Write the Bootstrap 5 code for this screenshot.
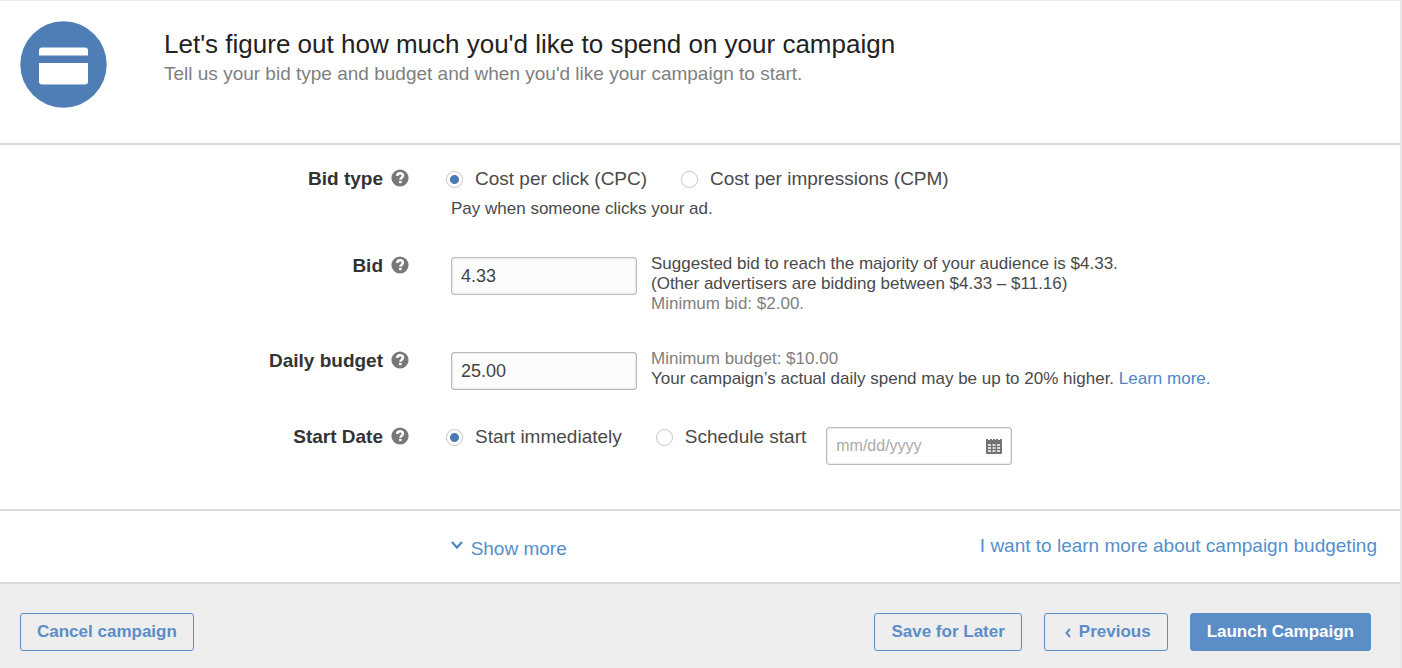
<!DOCTYPE html>
<html lang="en">
<head>
<meta charset="utf-8">
<meta name="viewport" content="width=device-width, initial-scale=1">
<title>Campaign budget</title>
<link rel="stylesheet" href="https://cdn.jsdelivr.net/npm/bootstrap@5.3.0/dist/css/bootstrap.min.css">
<style>
  body { font-family: "Liberation Sans", Arial, sans-serif; font-size: 19px; line-height: 24px; color: #4a4a4a; }
  a { color: #4b87c5; text-decoration: none; }
  .page-frame { border-top: 1px solid #eee; border-right: 2px solid #e8e8ec; }
  .section-line { border-bottom: 2px solid #d9d9d9; }
  .intro { padding: 20px; gap: 57px; min-height: 144px; }
  .intro-icon { width: 87px; height: 87px; }
  .intro-title { font-size: 26px; line-height: 32px; color: #222; margin: 7px 0 0; font-weight: 300; }
  .intro-text { line-height: 20px; }
  .fine { font-size: 17px; line-height: 20px; }
  .intro-text, .muted { color: #808080; }
  .form-area { padding: 22px 0 44px; gap: 35px; }
  .label-col { width: 32%; padding-right: 39px; color: #333; font-weight: 700; }
  .field-col { padding-left: 3px; }
  .help { border: 0; padding: 2px 0 0; background: none; line-height: 0; }
  .choices { gap: 34px; margin-left: -5px; }
  .choice { gap: 12px; }
  .form-check-input.dot { width: 17px; height: 17px; margin: 0; border: 1px solid #c4c4c4; }
  .form-check-input.dot:checked { background: radial-gradient(circle, #4a7ab5 0 4px, #fff 5px); border-color: #c4c4c4; }
  .money, .date-box { width: 186px; height: 38px; border: 1px solid #bbb; border-radius: 3px; background: #fcfcfc; box-shadow: inset 0 0 2px #bbb; color: #444; }
  .money { margin-top: 3px; padding: 0 9px; font-size: 18px; }
  .date-box { margin: 2px 0 0 20px; padding: 0 9px; background: #fff; }
  .date-box input { min-width: 0; outline: 0; font-size: 16px; }
  .date-box input::placeholder { color: #aaa; opacity: 1; }
  .hints { margin-left: 14px; }
  .more-area { min-height: 73px; padding: 0 23px 2px 0; }
  .more-area a { color: #548fcb; }
  .more-link { margin-left: calc(32% + 10px); padding-top: 6px; }
  .actions { background: #eee; padding: 29px 29px 18px 20px; gap: 22px; }
  .btn.action { --bs-btn-color: #5b8dc6; --bs-btn-border-color: #5b8dc6; --bs-btn-hover-bg: #5b8dc6; --bs-btn-hover-color: #fff;
    --bs-btn-border-width: 1px; --bs-btn-padding-x: 16px; --bs-btn-padding-y: 6px; --bs-btn-border-radius: 3px;
    --bs-btn-font-size: 17px; --bs-btn-line-height: 24px; --bs-btn-font-weight: 700; }
  .btn.action-main { --bs-btn-bg: #5b8dc6; --bs-btn-color: #fff; }
</style>
</head>
<body>
<svg class="d-none" aria-hidden="true">
  <symbol id="question" viewBox="0 0 18 18">
    <circle cx="9" cy="9" r="8.6" fill="#77787b"/>
    <path d="M6.2 7.1C6.2 5.2 7.4 4.3 9.1 4.3s2.8 1 2.8 2.4c0 2-2.5 2-2.5 4" fill="none" stroke="#fff" stroke-width="2.4"/>
    <rect x="8.1" y="11.9" width="2.5" height="2.3" fill="#fff"/>
  </symbol>
</svg>
<main class="page-frame min-vh-100 d-flex flex-column">
  <header class="intro section-line d-flex align-items-start">
    <svg class="intro-icon flex-shrink-0" viewBox="0 0 87 87" aria-hidden="true">
      <circle cx="43.5" cy="43.5" r="43.2" fill="#4f7db6"/>
      <path d="M22 26.500h43q3 0 3 3v5H19v-5q0-3 3-3zM19 42h49v18.500q0 3-3 3H22q-3 0-3-3z" fill="#fff"/>
    </svg>
    <div>
      <h1 class="intro-title">Let's figure out how much you'd like to spend on your campaign</h1>
      <p class="intro-text mb-0 mt-1">Tell us your bid type and budget and when you'd like your campaign to start.</p>
    </div>
  </header>

  <form class="form-area section-line d-flex flex-column">
    <div class="d-flex">
      <div class="label-col d-flex justify-content-end align-items-start gap-2 flex-shrink-0">
        <span id="bid-type">Bid type</span>
        <button type="button" class="help" aria-label="About bid type"><svg width="18" height="18"><use href="#question"/></svg></button>
      </div>
      <div class="field-col" role="radiogroup" aria-labelledby="bid-type">
        <div class="choices d-flex">
          <div class="choice d-flex align-items-center"><input class="form-check-input dot" type="radio" name="type" id="cpc" checked><label for="cpc">Cost per click (CPC)</label></div>
          <div class="choice d-flex align-items-center"><input class="form-check-input dot" type="radio" name="type" id="cpm"><label for="cpm">Cost per impressions (CPM)</label></div>
        </div>
        <p class="fine mb-0 mt-2">Pay when someone clicks your ad.</p>
      </div>
    </div>

    <div class="d-flex">
      <div class="label-col d-flex justify-content-end align-items-start gap-2 flex-shrink-0">
        <label for="bid">Bid</label>
        <button type="button" class="help" aria-label="About bid"><svg width="18" height="18"><use href="#question"/></svg></button>
      </div>
      <div class="field-col d-flex align-items-start">
        <input class="money flex-shrink-0" type="text" id="bid" value="4.33">
        <div class="hints fine">
          <div>Suggested bid to reach the majority of your audience is $4.33.</div>
          <div>(Other advertisers are bidding between $4.33 – $11.16)</div>
          <div class="muted">Minimum bid: $2.00.</div>
        </div>
      </div>
    </div>

    <div class="d-flex">
      <div class="label-col d-flex justify-content-end align-items-start gap-2 flex-shrink-0">
        <label for="budget">Daily budget</label>
        <button type="button" class="help" aria-label="About daily budget"><svg width="18" height="18"><use href="#question"/></svg></button>
      </div>
      <div class="field-col d-flex align-items-start">
        <input class="money flex-shrink-0" type="text" id="budget" value="25.00">
        <div class="hints fine">
          <div class="muted">Minimum budget: $10.00</div>
          <div>Your campaign’s actual daily spend may be up to 20% higher. <a href="#">Learn more.</a></div>
        </div>
      </div>
    </div>

    <div class="d-flex">
      <div class="label-col d-flex justify-content-end align-items-start gap-2 flex-shrink-0">
        <span id="start-date">Start Date</span>
        <button type="button" class="help" aria-label="About start date"><svg width="18" height="18"><use href="#question"/></svg></button>
      </div>
      <div class="field-col d-flex align-items-start" role="radiogroup" aria-labelledby="start-date">
        <div class="choices d-flex">
          <div class="choice d-flex align-items-center"><input class="form-check-input dot" type="radio" name="start" id="now" checked><label for="now">Start immediately</label></div>
          <div class="choice d-flex align-items-center"><input class="form-check-input dot" type="radio" name="start" id="later"><label for="later">Schedule start</label></div>
        </div>
        <div class="date-box d-flex align-items-center">
          <input class="border-0 bg-transparent p-0 flex-grow-1" type="text" placeholder="mm/dd/yyyy" aria-label="Start date">
          <svg class="flex-shrink-0" width="16" height="16" viewBox="0 0 16 16" aria-hidden="true">
            <path d="M0 1h2v1h2V1h2v1h1V1h2v1h1V1h2v1h2V1h2v14q0 1-1 1H1q-1 0-1-1z" fill="#727376"/>
            <path d="M2 6h3v2H2zm4.500 0h3v2h-3zM11 6h3v2h-3zM2 9h3v2H2zm4.500 0h3v2h-3zM11 9h3v2h-3zM2 12h3v2H2zm4.500 0h3v2h-3zM11 12h3v2h-3z" fill="#fff" fill-opacity=".75"/>
          </svg>
        </div>
      </div>
    </div>
  </form>

  <div class="more-area section-line d-flex align-items-center justify-content-between">
    <a href="#" class="more-link d-flex align-items-start gap-2">
      <svg class="mt-1" width="12" height="9" viewBox="0 0 12 9" aria-hidden="true"><path d="M1 1l5 5.500L11 1" fill="none" stroke="#4b87c5" stroke-width="2.200"/></svg>
      Show more
    </a>
    <a href="#">I want to learn more about campaign budgeting</a>
  </div>

  <footer class="actions flex-grow-1 d-flex align-items-start">
    <button type="button" class="btn action me-auto">Cancel campaign</button>
    <button type="button" class="btn action">Save for Later</button>
    <button type="button" class="btn action"><svg class="ms-1 me-2" width="6" height="10" viewBox="0 0 6 10" aria-hidden="true"><path d="M5 1L1.500 5 5 9" fill="none" stroke="currentColor" stroke-width="2"/></svg>Previous</button>
    <button type="button" class="btn action action-main">Launch Campaign</button>
  </footer>
</main>
<script src="https://cdn.jsdelivr.net/npm/bootstrap@5.3.0/dist/js/bootstrap.bundle.min.js"></script>
</body>
</html>
